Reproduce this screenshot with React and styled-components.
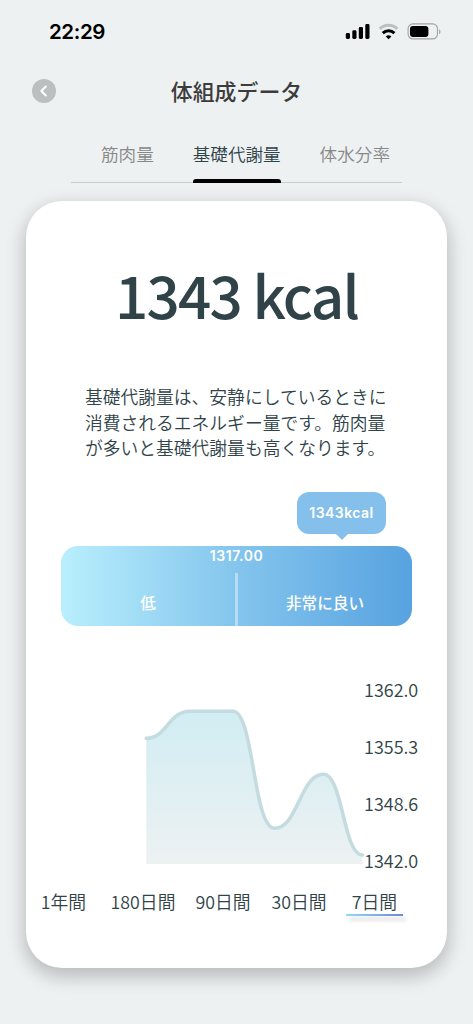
import React from "react";
import styled, { createGlobalStyle } from "styled-components";

const tabs = ["筋肉量", "基礎代謝量", "体水分率"];
const scale = ["1362.0", "1355.3", "1348.6", "1342.0"];
const periods = [
  { label: "1年間", width: 57 },
  { label: "180日間", width: 102 },
  { label: "90日間", width: 58 },
  { label: "30日間", width: 94 },
  { label: "7日間", width: 57 },
];

const App = () => {
  return (
    <Screen>
      <GlobalStyle />
      <StatusBar>
        <Clock>22:29</Clock>
        <StatusIcons />
      </StatusBar>

      <Header>
        <BackButton aria-label="戻る">
          <svg width="24" height="24" viewBox="0 0 24 24" fill="none">
            <path d="M13.8 7.6 9.4 12l4.4 4.4" stroke="#fff" strokeWidth="2.1" strokeLinecap="round" strokeLinejoin="round" />
          </svg>
        </BackButton>
        <Title>体組成データ</Title>
      </Header>

      <Tabs>
        {tabs.map((tab, i) => (
          <Tab key={tab} $active={i === 1}>
            {tab}
          </Tab>
        ))}
      </Tabs>

      <Card>
        <Value>1343 kcal</Value>
        <Description>
          基礎代謝量は、安静にしているときに
          <br />
          消費されるエネルギー量です。筋肉量
          <br />
          が多いと基礎代謝量も高くなります。
        </Description>

        <Bubble>1343kcal</Bubble>
        <Gauge>
          <Threshold>1317.00</Threshold>
          <Zones>
            <Zone>低</Zone>
            <Divider />
            <Zone>非常に良い</Zone>
          </Zones>
        </Gauge>

        <ChartRow>
          <Chart />
          <Scale>
            {scale.map((value) => (
              <span key={value}>{value}</span>
            ))}
          </Scale>
        </ChartRow>

        <Periods>
          {periods.map((period, i) => (
            <Period key={period.label} $width={period.width} $active={i === 4}>
              {period.label}
            </Period>
          ))}
        </Periods>
      </Card>
    </Screen>
  );
};

const StatusIcons = () => (
  <svg width="98" height="20" viewBox="0 0 98 20">
    <rect x="0.8" y="12" width="4.2" height="6" rx="1.4" />
    <rect x="7.3" y="9.3" width="4.2" height="8.7" rx="1.4" />
    <rect x="13.8" y="6" width="4.2" height="12" rx="1.4" />
    <rect x="20.3" y="3" width="4.2" height="15" rx="1.4" />
    <g fill="none" strokeWidth="3">
      <path d="M34.8 7.9a12.6 12.6 0 0 1 17.6 0" stroke="#bdc0c1" />
      <path d="M37.8 12.1a8.3 8.3 0 0 1 11.6 0" stroke="#000" />
    </g>
    <path d="M43.6 18.2 40.8 15.4a4.2 4.2 0 0 1 5.6 0z" />
    <rect x="63.1" y="2.9" width="29.4" height="15" rx="4.8" fill="none" stroke="#a0a3a4" strokeWidth="1.1" />
    <rect x="65" y="4.9" width="18.4" height="11" rx="3" />
    <path d="M94.1 8.2c1.8.7 1.8 4.3 0 5z" fill="#a0a3a4" />
  </svg>
);

const Chart = () => (
  <svg width="226" height="170" viewBox="140 700 226 170">
    <defs>
      <linearGradient id="area" x1="0" y1="0" x2="0" y2="1">
        <stop offset="0" stopColor="#d1edf3" />
        <stop offset="1" stopColor="#edf1f2" />
      </linearGradient>
    </defs>
    <path
      d="M146.3 738.4C167 738.4 168 711.3 190 711.3H233C254 711.3 253 828.3 274.5 828.3C298 828.3 300 774.3 323.5 774.3C343 774.3 343 855 362.5 855V864H146.3Z"
      fill="url(#area)"
    />
    <path
      d="M146.3 738.4C167 738.4 168 711.3 190 711.3H233C254 711.3 253 828.3 274.5 828.3C298 828.3 300 774.3 323.5 774.3C343 774.3 343 855 362.5 855"
      fill="none"
      stroke="#c4dce0"
      strokeWidth="3.6"
      strokeLinecap="round"
    />
  </svg>
);

const GlobalStyle = createGlobalStyle`
  * {
    box-sizing: border-box;
  }

  body {
    margin: 0;
    background-color: #edf1f2;
    font-family: "Noto Sans CJK JP", sans-serif;
    font-weight: 350;
    color: #2f4348;
  }
`;

const Screen = styled.div`
  display: flex;
  flex-direction: column;
  width: 473px;
  height: 1024px;
  overflow: hidden;
  background-color: #edf1f2;
`;

const StatusBar = styled.div`
  display: flex;
  justify-content: space-between;
  align-items: center;
  height: 62px;
  padding: 0 30px 0 49px;
`;

const Clock = styled.div`
  font-family: Inter, sans-serif;
  font-size: 20.5px;
  font-weight: 600;
  letter-spacing: -0.4px;
  color: #000;
`;

const Header = styled.header`
  display: grid;
  grid-template-columns: 24px 1fr 24px;
  align-items: center;
  height: 58px;
  padding: 0 32px;
`;

const BackButton = styled.button`
  width: 24px;
  height: 24px;
  padding: 0;
  border: none;
  border-radius: 50%;
  background-color: #bbbfc0;

  svg {
    display: block;
  }
`;

const Title = styled.h1`
  margin: 0;
  text-align: center;
  font-size: 21.9px;
  font-weight: 500;
  line-height: 30px;
  color: #3c3c3c;
`;

const Tabs = styled.nav`
  display: flex;
  justify-content: space-between;
  height: 63px;
  margin: 0 71px;
  padding: 21px 12px 0 30px;
  border-bottom: 1px solid #cdc8d4;
`;

const Tab = styled.div`
  position: relative;
  font-size: 17.6px;
  line-height: 26px;
  color: ${({ $active }) => ($active ? "#2f4348" : "#888")};

  &::after {
    content: "";
    display: ${({ $active }) => ($active ? "block" : "none")};
    position: absolute;
    left: 0;
    right: 0;
    bottom: -1px;
    height: 4px;
    border-radius: 3px 3px 0 0;
    background-color: #000;
  }
`;

const Card = styled.main`
  display: flex;
  flex-direction: column;
  width: 421px;
  height: 767px;
  margin: 18px 0 0 26px;
  border-radius: 36px;
  background-color: #fff;
  box-shadow: 0 7px 18px 2px rgba(0, 0, 0, 0.22);
`;

const Value = styled.div`
  margin-top: 51px;
  text-align: center;
  font-size: 58.4px;
  font-weight: 500;
  letter-spacing: -1.75px;
  line-height: 84px;
`;

const Description = styled.p`
  margin: 48px 0 0 59px;
  font-size: 17.78px;
  line-height: 25.5px;
  white-space: nowrap;
`;

const Bubble = styled.div`
  position: relative;
  display: flex;
  justify-content: center;
  align-items: center;
  width: 89px;
  height: 42px;
  margin: 31px 0 0 271px;
  border-radius: 12px;
  background-color: #84c0eb;
  font-family: Inter, sans-serif;
  font-size: 14px;
  font-weight: 600;
  letter-spacing: 0.45px;
  color: #fff;

  &::after {
    content: "";
    position: absolute;
    top: 41px;
    left: 38px;
    border: 7px solid transparent;
    border-top-color: #84c0eb;
    border-bottom: none;
  }
`;

const Gauge = styled.div`
  display: flex;
  flex-direction: column;
  flex: none;
  width: 351px;
  height: 80px;
  margin: 12px 0 0 35px;
  border-radius: 17px;
  background: linear-gradient(90deg, #b9effd 0%, #84c5ed 50%, #57a2e0 100%);
  color: #fff;
`;

const Threshold = styled.div`
  height: 27px;
  text-align: center;
  font-family: Inter, sans-serif;
  font-size: 14px;
  font-weight: 600;
  letter-spacing: 0.55px;
  line-height: 20px;
`;

const Zones = styled.div`
  display: grid;
  grid-template-columns: 174px 3px 174px;
  flex: 1;
`;

const Zone = styled.div`
  padding-top: 18px;
  text-align: center;
  font-size: 15.6px;
  font-weight: 500;
  line-height: 22px;
`;

const Divider = styled.div`
  background-color: rgba(255, 255, 255, 0.4);
`;

const ChartRow = styled.div`
  display: flex;
  align-items: flex-end;
  height: 197px;
  margin: 50px 0 0 114px;

  svg {
    flex: none;
    margin-bottom: 3px;
  }
`;

const Scale = styled.div`
  display: flex;
  flex-direction: column;
  justify-content: space-between;
  height: 197px;
  margin-left: -2px;
  font-size: 18px;
  line-height: 26px;
`;

const Periods = styled.div`
  display: flex;
  margin: 15px 0 0 9px;
`;

const Period = styled.div`
  width: ${({ $width }) => $width}px;
  height: 28px;
  text-align: center;
  white-space: nowrap;
  font-size: 17.8px;
  line-height: 26px;

  &::after {
    content: "";
    display: ${({ $active }) => ($active ? "block" : "none")};
    width: 57px;
    height: 2px;
    margin: 0 auto;
    background: linear-gradient(90deg, #91dcf5, #7385d6);
    box-shadow: 3px 4px 4px rgba(0, 0, 0, 0.2);
  }
`;

export default App;
